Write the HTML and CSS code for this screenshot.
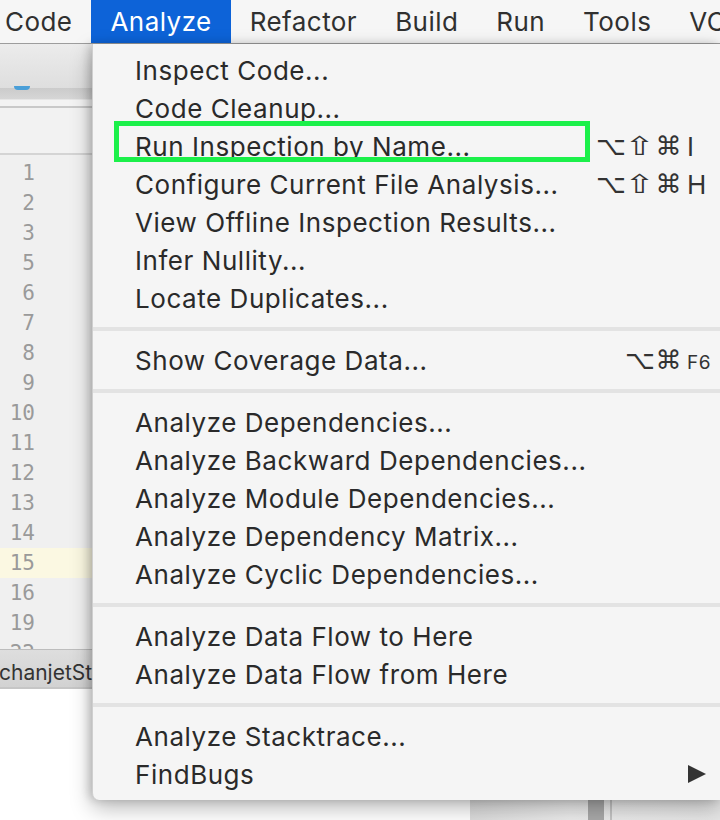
FILE: index.html
```html
<!DOCTYPE html>
<html>
<head>
<meta charset="utf-8">
<link rel="stylesheet" href="styles.css">
</head>
<body>
<div class="menubar">
  <span class="mb-item">Code</span>
  <span class="mb-item active">Analyze</span>
  <span class="mb-item">Refactor</span>
  <span class="mb-item">Build</span>
  <span class="mb-item">Run</span>
  <span class="mb-item">Tools</span>
  <span class="mb-item">VCS</span>
</div>
<div class="workspace">
  <div class="editor">
    <div class="toolbar"><span class="blue-dot"></span></div>
    <div class="band"></div>
    <div class="breadcrumb"></div>
    <div class="gutter">
      <div class="ln">1</div>
      <div class="ln">2</div>
      <div class="ln">3</div>
      <div class="ln">5</div>
      <div class="ln">6</div>
      <div class="ln">7</div>
      <div class="ln">8</div>
      <div class="ln">9</div>
      <div class="ln">10</div>
      <div class="ln">11</div>
      <div class="ln">12</div>
      <div class="ln">13</div>
      <div class="ln">14</div>
      <div class="ln current">15</div>
      <div class="ln">16</div>
      <div class="ln">19</div>
      <div class="ln">22</div>
    </div>
    <div class="tabbar"><span class="tab-text">chanjetSt</span></div>
    <div class="lower">
      <div class="lower-left"></div>
      <div class="lower-right"><span class="vbar"></span><span class="vline"></span></div>
    </div>
  </div>

  <div class="dropdown">
    <div class="group">
      <div class="item"><span class="label">Inspect Code...</span></div>
      <div class="item"><span class="label">Code Cleanup...</span></div>
      <div class="item"><span class="label">Run Inspection by Name...</span><span class="m">⌥</span><span class="m shift">⇧</span><span class="m">⌘</span><span class="key">I</span></div>
      <div class="item"><span class="label">Configure Current File Analysis...</span><span class="m">⌥</span><span class="m shift">⇧</span><span class="m">⌘</span><span class="key">H</span></div>
      <div class="item"><span class="label">View Offline Inspection Results...</span></div>
      <div class="item"><span class="label">Infer Nullity...</span></div>
      <div class="item"><span class="label">Locate Duplicates...</span></div>
    </div>
    <div class="sep"></div>
    <div class="group">
      <div class="item"><span class="label">Show Coverage Data...</span><span class="m"></span><span class="m">⌥</span><span class="m">⌘</span><span class="key small">F6</span></div>
    </div>
    <div class="sep"></div>
    <div class="group">
      <div class="item"><span class="label">Analyze Dependencies...</span></div>
      <div class="item"><span class="label">Analyze Backward Dependencies...</span></div>
      <div class="item"><span class="label">Analyze Module Dependencies...</span></div>
      <div class="item"><span class="label">Analyze Dependency Matrix...</span></div>
      <div class="item"><span class="label">Analyze Cyclic Dependencies...</span></div>
    </div>
    <div class="sep"></div>
    <div class="group">
      <div class="item"><span class="label">Analyze Data Flow to Here</span></div>
      <div class="item"><span class="label">Analyze Data Flow from Here</span></div>
    </div>
    <div class="sep"></div>
    <div class="group">
      <div class="item"><span class="label">Analyze Stacktrace...</span></div>
      <div class="item"><span class="label">FindBugs</span><span class="m"></span><span class="m"></span><span class="m"></span><span class="key"><svg class="arrow" width="18" height="18" viewBox="0 0 18 18"><polygon points="0,0 18,9 0,18" fill="#333"/></svg></span></div>
    </div>
  </div>

  <div class="highlight-box"></div>
</div>
</body>
</html>
```

FILE: styles.css
```css
* { box-sizing: border-box; }
html, body {
  margin: 0;
  padding: 0;
  width: 720px;
  height: 820px;
  overflow: hidden;
  background: #ffffff;
  font-family: "Inter", "Liberation Sans", sans-serif;
}

.menubar {
  height: 44px;
  display: flex;
  align-items: stretch;
  background: #f6f6f6;
  border-bottom: 1px solid #9d9d9d;
  margin-left: -14px;
  white-space: nowrap;
  overflow: hidden;
  width: 734px;
}
.mb-item {
  display: flex;
  align-items: center;
  padding: 0 19px;
  font-size: 26px;
  color: #303030;
  letter-spacing: 0.45px;
}
.mb-item.active {
  background: #0d63d8;
  color: #ffffff;
}

.workspace {
  position: relative;
  height: 776px;
}

.editor {
  display: flex;
  flex-direction: column;
  height: 100%;
}
.toolbar {
  height: 44px;
  background: linear-gradient(#ececec, #dedede);
  position: relative;
}
.blue-dot {
  position: absolute;
  left: 14px;
  top: 42px;
  width: 16px;
  height: 4px;
  border-radius: 0 0 8px 8px;
  background: #4a9fd8;
  z-index: 1;
}
.band {
  height: 12px;
  background: linear-gradient(#cbcbcb, #d6d6d6);
  border-bottom: 1px solid #e6e6e6;
}
.breadcrumb {
  height: 55px;
  background: #f2f2f2;
  border-top: 7px solid #f3f3f3;
  border-bottom: 2px solid #d4d4d4;
  position: relative;
}
.breadcrumb::before {
  content: "";
  position: absolute;
  left: 0; right: 0; top: -1px;
  height: 2px;
  background: #c9c9c9;
}

.gutter {
  height: 494px;
  overflow: hidden;
  background: #f0f0f0;
  padding-top: 3px;
  font-family: "DejaVu Sans Mono", monospace;
  font-size: 21px;
  color: #9a9a9a;
}
.ln {
  height: 30px;
  line-height: 30px;
  width: 92px;
  padding-right: 57px;
  text-align: right;
}
.ln.current {
  background: #fbf8e2;
}

.tabbar {
  height: 40px;
  background: linear-gradient(#dedede, #d2d2d2);
  border-top: 1px solid #bdbdbd;
  border-bottom: 2px solid #c6c6c6;
  display: flex;
  align-items: center;
  padding-top: 7px;
  overflow: hidden;
}
.tab-text {
  font-size: 21px;
  color: #333;
  margin-left: -1px;
  letter-spacing: 0;
}

.lower {
  flex: 1;
  display: flex;
}
.lower-left {
  width: 470px;
  background: #ffffff;
}
.lower-right {
  flex: 1;
  background: linear-gradient(90deg, #dcdcdc, #ececec 40%, #e6e6e6);
  display: flex;
  align-items: stretch;
  padding-left: 118px;
}
.vbar {
  width: 16px;
  background: #a9a9a9;
  margin-right: 6px;
}
.vline {
  width: 2px;
  background: #c4c4c4;
}

.dropdown {
  position: absolute;
  left: 92px;
  top: 0;
  width: 628px;
  background: #f5f5f5;
  border-left: 1px solid #cfcfcf;
  border-radius: 0 0 0 7px;
  padding: 7px 0 7px 0;
  box-shadow: 0 8px 22px rgba(0, 0, 0, 0.28), -3px 0 8px rgba(0, 0, 0, 0.16);
  color: #2a2a2a;
}
.sep {
  height: 4px;
  margin: 10px 0;
  background: #e3e3e3;
}
.item {
  height: 38px;
  display: grid;
  grid-template-columns: 461px 29px 29px 29px 1fr;
  align-items: center;
  padding-left: 42px;
  font-size: 26px;
  white-space: nowrap;
  letter-spacing: 0.55px;
}
.m {
  font-family: "DejaVu Sans", sans-serif;
  font-size: 26px;
  text-align: center;
  color: #333;
  letter-spacing: 0;
}
.m.shift {
  display: inline-block;
  transform: scaleX(1.4);
}
.key {
  padding-left: 4px;
  font-size: 26px;
  color: #333;
  display: flex;
  align-items: center;
}
.key.small {
  font-size: 19px;
  padding-top: 4px;
  letter-spacing: 0.5px;
}
.arrow {
  display: block;
  margin-left: 1px;
}

.highlight-box {
  position: absolute;
  left: 114px;
  top: 77px;
  width: 476px;
  height: 41px;
  border: 5px solid #1cf04a;
}
```
